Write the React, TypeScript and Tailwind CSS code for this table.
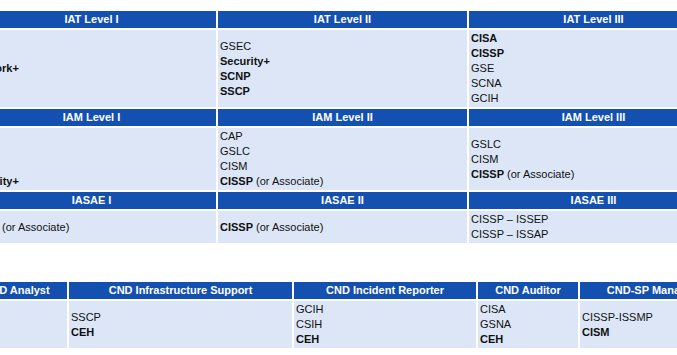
import React from "react";

type Line = { b?: string; n?: string };

const Cell = ({ lines, h, shift }: { lines: Line[]; h: string; shift?: boolean }) => (
  <div className={`bg-[#dce6f7] flex flex-col justify-center pl-[2px] ${h}`}>
    {lines.map((l, i) => (
      <div
        key={i}
        className={`leading-[15px] whitespace-nowrap text-[#111] ${shift ? "ml-[-3px]" : ""}`}
      >
        {l.b && <span className="font-bold">{l.b}</span>}
        {l.b && l.n ? " " : ""}
        {l.n && <span>{l.n}</span>}
      </div>
    ))}
  </div>
);

const Head = ({ t }: { t: string }) => (
  <div className="bg-[#1450b0] text-white font-bold h-[17px] flex items-center justify-center leading-[17px] whitespace-nowrap">
    {t}
  </div>
);

export default function App() {
  return (
    <div
      className="w-[677px] h-[355px] overflow-hidden bg-white relative text-[11px]"
      style={{ fontFamily: '"Liberation Sans", Arial, sans-serif' }}
    >
      <div className="pt-[11px] ml-[-33px]">
        <div className="grid grid-cols-[249px_249px_249px] gap-[2px] w-max">
          <Head t="IAT Level I" />
          <Head t="IAT Level II" />
          <Head t="IAT Level III" />
          <Cell h="h-[77px]" lines={[{ n: "A+" }, { b: "Network+" }, { n: "SSCP" }]} />
          <Cell
            h="h-[77px]"
            lines={[{ n: "GSEC" }, { b: "Security+" }, { b: "SCNP" }, { b: "SSCP" }]}
          />
          <Cell
            h="h-[77px]"
            lines={[{ b: "CISA" }, { b: "CISSP" }, { n: "GSE" }, { n: "SCNA" }, { n: "GCIH" }]}
          />
          <Head t="IAM Level I" />
          <Head t="IAM Level II" />
          <Head t="IAM Level III" />
          <Cell
            h="h-[62px]"
            lines={[{ n: "CAP" }, { n: "GSLC" }, { n: "CISM" }, { b: "Security+" }]}
          />
          <Cell
            h="h-[62px]"
            lines={[{ n: "CAP" }, { n: "GSLC" }, { n: "CISM" }, { b: "CISSP", n: "(or Associate)" }]}
          />
          <Cell
            h="h-[62px]"
            lines={[{ n: "GSLC" }, { n: "CISM" }, { b: "CISSP", n: "(or Associate)" }]}
          />
          <Head t="IASAE I" />
          <Head t="IASAE II" />
          <Head t="IASAE III" />
          <Cell h="h-[32px]" shift lines={[{ b: "CISSP", n: "(or Associate)" }]} />
          <Cell h="h-[32px]" lines={[{ b: "CISSP", n: "(or Associate)" }]} />
          <Cell h="h-[32px]" lines={[{ n: "CISSP – ISSEP" }, { n: "CISSP – ISSAP" }]} />
        </div>
      </div>

      <div className="pt-[39px] ml-[-34px]">
        <div className="grid grid-cols-[101px_223px_182px_100px_144px] gap-[2px] w-max">
          <Head t="CND Analyst" />
          <Head t="CND Infrastructure Support" />
          <Head t="CND Incident Reporter" />
          <Head t="CND Auditor" />
          <Head t="CND-SP Manager" />
          <Cell h="h-[47px]" lines={[{ n: "" }]} />
          <Cell h="h-[47px]" lines={[{ n: "SSCP" }, { b: "CEH" }]} />
          <Cell h="h-[47px]" lines={[{ n: "GCIH" }, { n: "CSIH" }, { b: "CEH" }]} />
          <Cell h="h-[47px]" lines={[{ n: "CISA" }, { n: "GSNA" }, { b: "CEH" }]} />
          <Cell h="h-[47px]" lines={[{ n: "CISSP-ISSMP" }, { b: "CISM" }]} />
        </div>
      </div>
    </div>
  );
}
